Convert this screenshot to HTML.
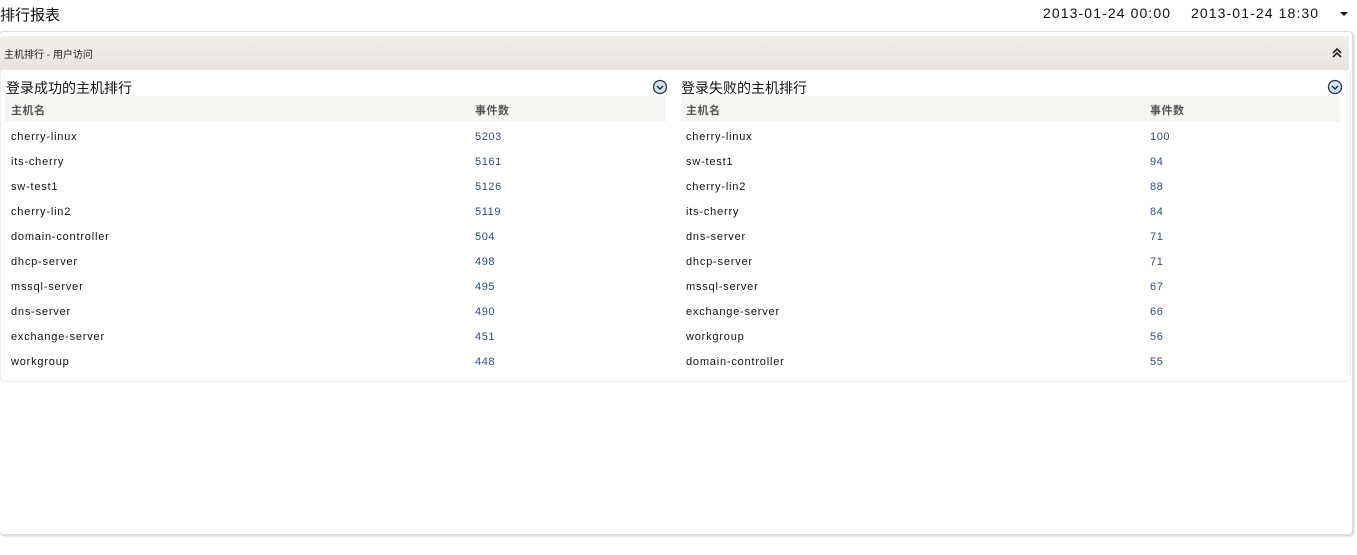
<!DOCTYPE html>
<html><head><meta charset="utf-8"><style>
body{margin:0;width:1357px;height:555px;background:#fff;font-family:"Liberation Sans","Noto Sans CJK SC",sans-serif;position:relative;overflow:hidden;color:#111}
.a{position:absolute;white-space:nowrap}
.title{left:0;top:4px;font-size:15px}
.date{top:5px;font-size:14px;letter-spacing:1.1px}
.panel{position:absolute;left:-1px;top:31px;width:1352px;height:502px;border:1px solid #ddd;border-radius:4px;box-shadow:1px 1px 2px #ccc}
.band{position:absolute;left:0;top:4px;width:1349px;height:34px;background:linear-gradient(#f2efeb,#e8e4df)}
.inner{position:absolute;left:0;top:38px;width:1349px;height:311px;border:1px solid #eee;border-top:none;border-radius:0 0 4px 4px}
.hdr{position:absolute;top:96px;height:26px;background:#f8f6f3}
.hc{font-size:11px;font-weight:bold;color:#555;top:102px;letter-spacing:0.5px}
.r{font-size:11px;color:#111;letter-spacing:0.8px}
.n{font-size:11px;color:#2a4f8a;letter-spacing:0.6px}
.st{font-size:14px;top:78px}
</style></head><body>
<div class="a title">排行报表</div>
<div class="a date" style="left:1043px">2013-01-24 00:00</div>
<div class="a date" style="left:1191px">2013-01-24 18:30</div>
<div class="a" style="left:1340px;top:12px;width:0;height:0;border-left:4px solid transparent;border-right:4px solid transparent;border-top:4px solid #111"></div>
<div class="panel"><div class="band"></div><div class="inner"></div></div>
<div class="a" style="left:4px;top:46px;font-size:10px;color:#222">主机排行 - 用户访问</div>
<svg class="a" style="left:1331px;top:47px" width="12" height="12" viewBox="0 0 12 12"><path d="M2 6 L6 2 L10 6 M2 10 L6 6 L10 10" fill="none" stroke="#222" stroke-width="1.6"/></svg>
<div class="a st" style="left:6px">登录成功的主机排行</div>
<div class="a st" style="left:681px">登录失败的主机排行</div>
<svg class="a" style="left:652px;top:79px" width="16" height="16" viewBox="0 0 16 16"><circle cx="8" cy="8" r="6.5" fill="#cfe6f5" stroke="#334" stroke-width="1.3"/><path d="M5 7 L8 10 L11 7" fill="none" stroke="#223" stroke-width="1.4"/></svg>
<svg class="a" style="left:1327px;top:79px" width="16" height="16" viewBox="0 0 16 16"><circle cx="8" cy="8" r="6.5" fill="#cfe6f5" stroke="#334" stroke-width="1.3"/><path d="M5 7 L8 10 L11 7" fill="none" stroke="#223" stroke-width="1.4"/></svg>
<div class="hdr" style="left:5px;width:661px"></div>
<div class="hdr" style="left:681px;width:660px"></div>
<div class="a hc" style="left:11px">主机名</div>
<div class="a hc" style="left:475px">事件数</div>
<div class="a hc" style="left:686px">主机名</div>
<div class="a hc" style="left:1150px">事件数</div>
<div class="a r" style="left:11px;top:125px;line-height:25px">cherry-linux<br>its-cherry<br>sw-test1<br>cherry-lin2<br>domain-controller<br>dhcp-server<br>mssql-server<br>dns-server<br>exchange-server<br>workgroup</div>
<div class="a n" style="left:475px;top:125px;line-height:25px">5203<br>5161<br>5126<br>5119<br>504<br>498<br>495<br>490<br>451<br>448</div>
<div class="a r" style="left:686px;top:125px;line-height:25px">cherry-linux<br>sw-test1<br>cherry-lin2<br>its-cherry<br>dns-server<br>dhcp-server<br>mssql-server<br>exchange-server<br>workgroup<br>domain-controller</div>
<div class="a n" style="left:1150px;top:125px;line-height:25px">100<br>94<br>88<br>84<br>71<br>71<br>67<br>66<br>56<br>55</div>
</body></html>
